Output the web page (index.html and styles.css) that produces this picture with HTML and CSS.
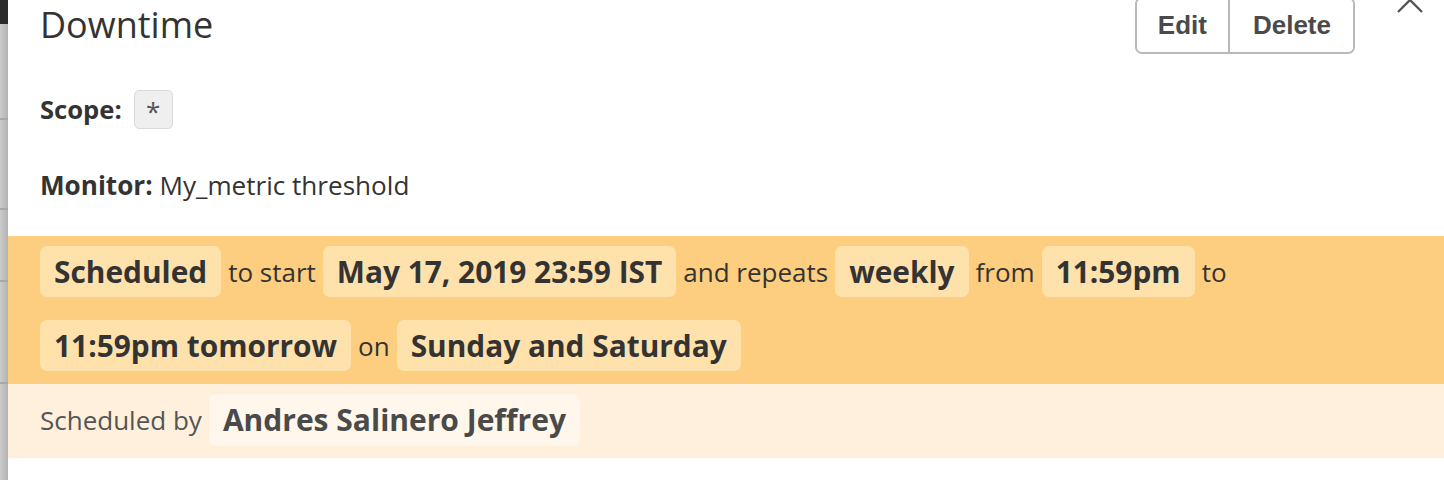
FILE: index.html
```html
<!DOCTYPE html>
<html lang="en">
<head>
<meta charset="utf-8">
<title>Downtime</title>
<link rel="stylesheet" href="styles.css">
</head>
<body>
<div class="app">
  <aside class="rail">
    <div class="rail-top"></div>
    <div class="rail-seg s1"></div>
    <div class="rail-seg s2"></div>
    <div class="rail-seg s3"></div>
    <div class="rail-seg s4"></div>
    <div class="rail-seg s5"></div>
  </aside>
  <main class="panel">
    <button class="close" aria-label="Close">
      <svg width="32" height="32" viewBox="0 0 32 32"><path d="M4 4 L28 28 M28 4 L4 28" stroke="#555" stroke-width="2.4" fill="none"/></svg>
    </button>
    <header class="header">
      <h1 class="title">Downtime</h1>
      <div class="btn-group">
        <button class="btn">Edit</button>
        <button class="btn">Delete</button>
      </div>
    </header>
    <div class="scope">
      <span class="label">Scope:</span>
      <span class="badge">*</span>
    </div>
    <div class="monitor"><span class="label">Monitor:</span> My_metric threshold</div>
    <section class="schedule">
      <span class="pill">Scheduled</span>
      <span class="word">to start</span>
      <span class="pill">May 17, 2019 23:59 IST</span>
      <span class="word">and repeats</span>
      <span class="pill">weekly</span>
      <span class="word">from</span>
      <span class="pill">11:59pm</span>
      <span class="word">to</span>
      <span class="pill">11:59pm tomorrow</span>
      <span class="word">on</span>
      <span class="pill">Sunday and Saturday</span>
    </section>
    <section class="by">
      <span class="word muted">Scheduled by</span>
      <span class="pill light">Andres Salinero Jeffrey</span>
    </section>
  </main>
</div>
</body>
</html>
```

FILE: styles.css
```css
html, body {
  margin: 0;
  padding: 0;
  background: #fff;
}
body {
  font-family: "Open Sans", "Noto Sans", sans-serif;
  color: #333;
  overflow: hidden;
}
.app {
  display: flex;
  min-height: 480px;
}
.rail {
  width: 8px;
  flex: 0 0 8px;
  display: flex;
  flex-direction: column;
  background: linear-gradient(to right, #cbcbcb, #b3b3b3);
}
.rail-top {
  height: 24px;
  background: #2b2b2b;
}
.rail-seg {
  border-bottom: 2px solid #a8a8a8;
}
.s1 { height: 94px; }
.s2 { height: 88px; }
.s3 { height: 70px; }
.s4 { height: 100px; }
.s5 { flex: 1; border-bottom: 0; }

.panel {
  flex: 1;
  position: relative;
  min-width: 0;
}
.close {
  position: absolute;
  top: -16px;
  right: 18px;
  padding: 0;
  border: 0;
  background: none;
  width: 32px;
  height: 32px;
}
.close svg { display: block; }

.header {
  display: flex;
  justify-content: space-between;
  align-items: flex-start;
  height: 52px;
  padding: 0 89px 0 32px;
}
.title {
  margin: 0;
  font-size: 36px;
  font-weight: 400;
  line-height: 49px;
  color: #333;
}
.btn-group {
  display: flex;
  margin-top: -3px;
  border: 2px solid #b9b9b9;
  border-radius: 7px;
  overflow: hidden;
  background: #fff;
}
.btn {
  font-family: "Liberation Sans", Arial, sans-serif;
  font-weight: 700;
  font-size: 26px;
  line-height: 30px;
  color: #4a4a4a;
  background: #fff;
  border: 0;
  padding: 11px 21px 12px 21px;
  margin: 0;
}
.btn + .btn {
  border-left: 2px solid #b9b9b9;
  padding: 11px 22px 12px 23px;
}

.label { font-weight: 700; }

.scope {
  display: flex;
  align-items: center;
  gap: 12px;
  margin-top: 38px;
  padding-left: 32px;
  font-size: 25.6px;
}
.badge {
  width: 37px;
  height: 37px;
  border: 1px solid #dadada;
  border-radius: 5px;
  background: #efefef;
  color: #555;
  font-size: 26px;
  line-height: 40px;
  text-align: center;
  box-sizing: content-box;
}

.monitor {
  margin-top: 38px;
  padding-left: 32px;
  font-size: 26.1px;
  line-height: 36px;
}

.schedule {
  margin-top: 33px;
  background: #fdce7f;
  padding: 10px 32px 13px;
  display: flex;
  flex-wrap: wrap;
  align-items: center;
  column-gap: 7px;
  row-gap: 23px;
}
.pill {
  display: inline-block;
  background: #fee1ab;
  border-radius: 7px;
  padding: 5px 14px;
  font-size: 29.85px;
  line-height: 41px;
  font-weight: 700;
  color: #333;
}
.word {
  font-size: 26px;
  color: #333;
}
.by {
  background: #fef0dd;
  padding: 10px 32px 12px;
  display: flex;
  align-items: center;
  column-gap: 7px;
}
.muted { color: #555; }
.pill.light {
  background: #fff7eb;
  color: #4a4a4a;
  font-size: 30px;
  line-height: 42px;
}
```
